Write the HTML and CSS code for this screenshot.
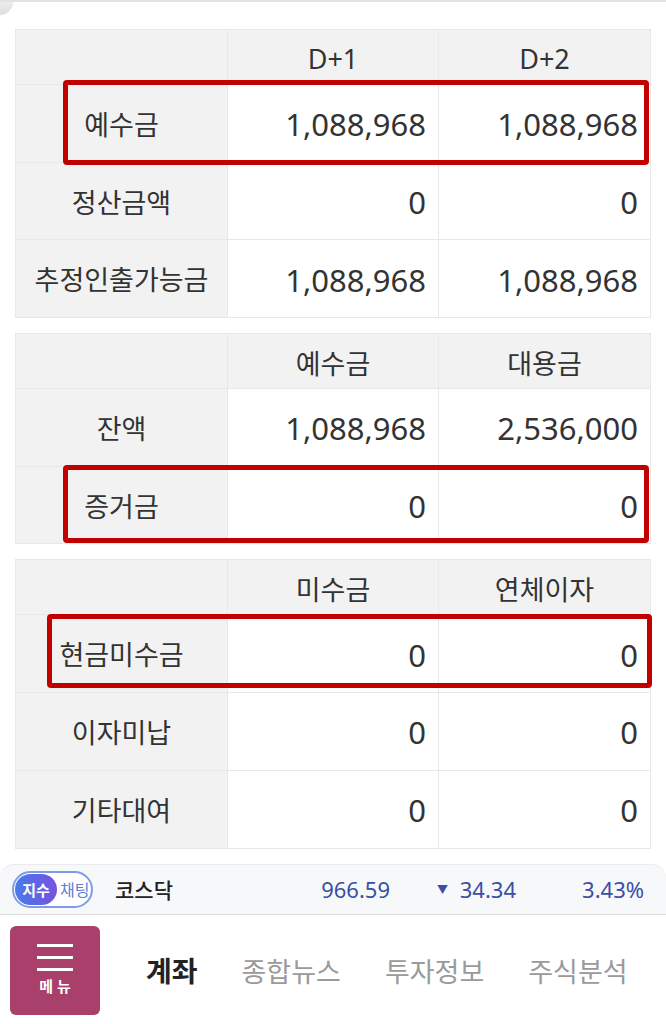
FILE: index.html
```html
<!DOCTYPE html>
<html lang="ko">
<head>
    <meta name="viewport" content="width=device-width, initial-scale=1.0">
    <link rel="stylesheet" href="styles.css">
    <title>예수금 조회</title>
</head>
<body>
    <div class="top">
        <div class="corner"></div>
    </div>

    <div class="sheet">
        <table>
            <tr class="head">
                <td class="label"></td>
                <td>D+1</td>
                <td>D+2</td>
            </tr>
            <tr>
                <td class="label">예수금</td>
                <td class="num">1,088,968</td>
                <td class="num">1,088,968</td>
            </tr>
            <tr>
                <td class="label">정산금액</td>
                <td class="num">0</td>
                <td class="num">0</td>
            </tr>
            <tr>
                <td class="label">추정인출가능금</td>
                <td class="num">1,088,968</td>
                <td class="num">1,088,968</td>
            </tr>
        </table>
        <div class="mark mark-1"></div>
    </div>

    <div class="sheet">
        <table>
            <tr class="head">
                <td class="label"></td>
                <td>예수금</td>
                <td>대용금</td>
            </tr>
            <tr>
                <td class="label">잔액</td>
                <td class="num">1,088,968</td>
                <td class="num">2,536,000</td>
            </tr>
            <tr>
                <td class="label">증거금</td>
                <td class="num">0</td>
                <td class="num">0</td>
            </tr>
        </table>
        <div class="mark mark-2"></div>
    </div>

    <div class="sheet">
        <table>
            <tr class="head">
                <td class="label"></td>
                <td>미수금</td>
                <td>연체이자</td>
            </tr>
            <tr>
                <td class="label">현금미수금</td>
                <td class="num">0</td>
                <td class="num">0</td>
            </tr>
            <tr>
                <td class="label">이자미납</td>
                <td class="num">0</td>
                <td class="num">0</td>
            </tr>
            <tr>
                <td class="label">기타대여</td>
                <td class="num">0</td>
                <td class="num">0</td>
            </tr>
        </table>
        <div class="mark mark-3"></div>
    </div>

    <div class="ticker">
        <div class="badge">
            <span class="badge-on">지수</span>
            <span class="badge-off">채팅</span>
        </div>
        <span class="t-name">코스닥</span>
        <span class="t-val t-price">966.59</span>
        <span class="t-val t-diff"><span class="down">&#9660;</span> 34.34</span>
        <span class="t-val t-rate">3.43%</span>
    </div>

    <nav class="nav">
        <button type="button" class="menu-btn">
            <span class="bars"><i></i><i></i><i></i></span>
            <span class="menu-text">메뉴</span>
        </button>
        <a class="tab active">계좌</a>
        <a class="tab">종합뉴스</a>
        <a class="tab">투자정보</a>
        <a class="tab">주식분석</a>
    </nav>
</body>
</html>
```

FILE: styles.css
```css
* {box-sizing: border-box;}

body {
    margin: 0;
    width: 666px;
    background-color: white;
    font-family: "Noto Sans", "Noto Sans CJK KR", sans-serif;
    color: #333;
    overflow: hidden;
}

/* strip left over from the page above */
.top {
    height: 29px;
    border-top: 2px solid #e3e3e3;
}
.corner {
    width: 13px;
    height: 13px;
    background: linear-gradient(#ececec, #dedede);
    border-bottom-right-radius: 13px;
}

/* Table styling */
.sheet {
    position: relative;
    margin: 0 15px 15px 15px;
}
table {
    width: 636px;
    border-collapse: collapse;
    table-layout: fixed;
    border: 1px solid #e6e6e6;
}
td {
    border: 1px solid #e8e8e8;
    height: 77.7px;
    padding: 0 12px;
    text-align: center;
    font-size: 27px;
    white-space: nowrap;
}
td:nth-child(1) {width: 212px;}
td:nth-child(2) {width: 211px;}

.head td {
    height: 55px;
    background-color: #f2f2f2;
    padding-top: 2px;
}
.label {
    background-color: #f2f2f2;
    font-family: "Noto Sans CJK KR", sans-serif;
    font-size: 27px;
    padding: 0 2px;
}
.num {
    text-align: right;
    font-size: 31px;
    padding-right: 12px;
    padding-top: 2px;
}

/* red annotation boxes drawn over the rows */
.mark {
    position: absolute;
    border: 5px solid #c20000;
    border-radius: 4px;
}
.mark-1 {left: 48px; top: 51px; width: 586px; height: 85px;}
.mark-2 {left: 48px; top: 132px; width: 586px; height: 78px;}
.mark-3 {left: 32px; top: 55px; width: 605px; height: 74px;}

/* index ticker */
.ticker {
    display: flex;
    align-items: center;
    height: 51px;
    padding-left: 12px;
    background-color: #f7f8fa;
    border-top-left-radius: 14px;
    border-top-right-radius: 14px;
    border-top: 1px solid #ececf0;
    border-bottom: 1px solid #dcdcdc;
}
.badge {
    display: flex;
    align-items: center;
    width: 81px;
    height: 37px;
    padding: 0 1px;
    border: 2px solid #7f9de4;
    border-radius: 19px;
    background-color: white;
    font-family: "Noto Sans CJK KR", sans-serif;
    font-size: 15px;
}
.badge-on {
    width: 42px;
    height: 31px;
    line-height: 31px;
    border-radius: 16px;
    text-align: center;
    color: white;
    font-weight: 700;
    background: linear-gradient(90deg, #4a7be9, #7552e2);
}
.badge-off {
    margin-left: 3px;
    font-size: 16px;
    color: #5d80d8;
}
.t-name {
    width: 172px;
    padding-left: 22px;
    font-family: "Noto Sans CJK KR", sans-serif;
    font-size: 21px;
    font-weight: 500;
    color: #222;
}
.t-val {
    text-align: right;
    font-size: 22px;
    color: #3b4fa6;
}
.t-price {width: 125px;}
.t-diff {width: 126px;}
.t-rate {width: 128px;}
.down {
    font-size: 11px;
    vertical-align: 4px;
    margin-right: 6px;
}

/* bottom navigation */
.nav {
    display: flex;
    align-items: center;
    gap: 44px;
    height: 111px;
    padding-left: 10px;
    font-family: "Noto Sans CJK KR", sans-serif;
}
.menu-btn {
    display: flex;
    flex-direction: column;
    align-items: center;
    width: 90px;
    height: 89px;
    margin-right: 2px;
    padding: 18px 0 0 0;
    border: none;
    border-radius: 6px;
    background-color: #a8406b;
    cursor: pointer;
}
.bars {
    display: flex;
    flex-direction: column;
    gap: 9px;
}
.bars i {
    display: block;
    width: 36px;
    height: 3px;
    background-color: white;
}
.menu-text {
    margin-top: 6px;
    padding-left: 4px;
    color: white;
    font-family: "Noto Sans CJK KR", sans-serif;
    font-size: 15px;
    font-weight: 700;
    letter-spacing: 4px;
    line-height: 18px;
}
.tab {
    font-size: 27px;
    color: #9a9a9a;
}
.tab.active {
    font-size: 28px;
    font-weight: 700;
    color: #222;
}
```
